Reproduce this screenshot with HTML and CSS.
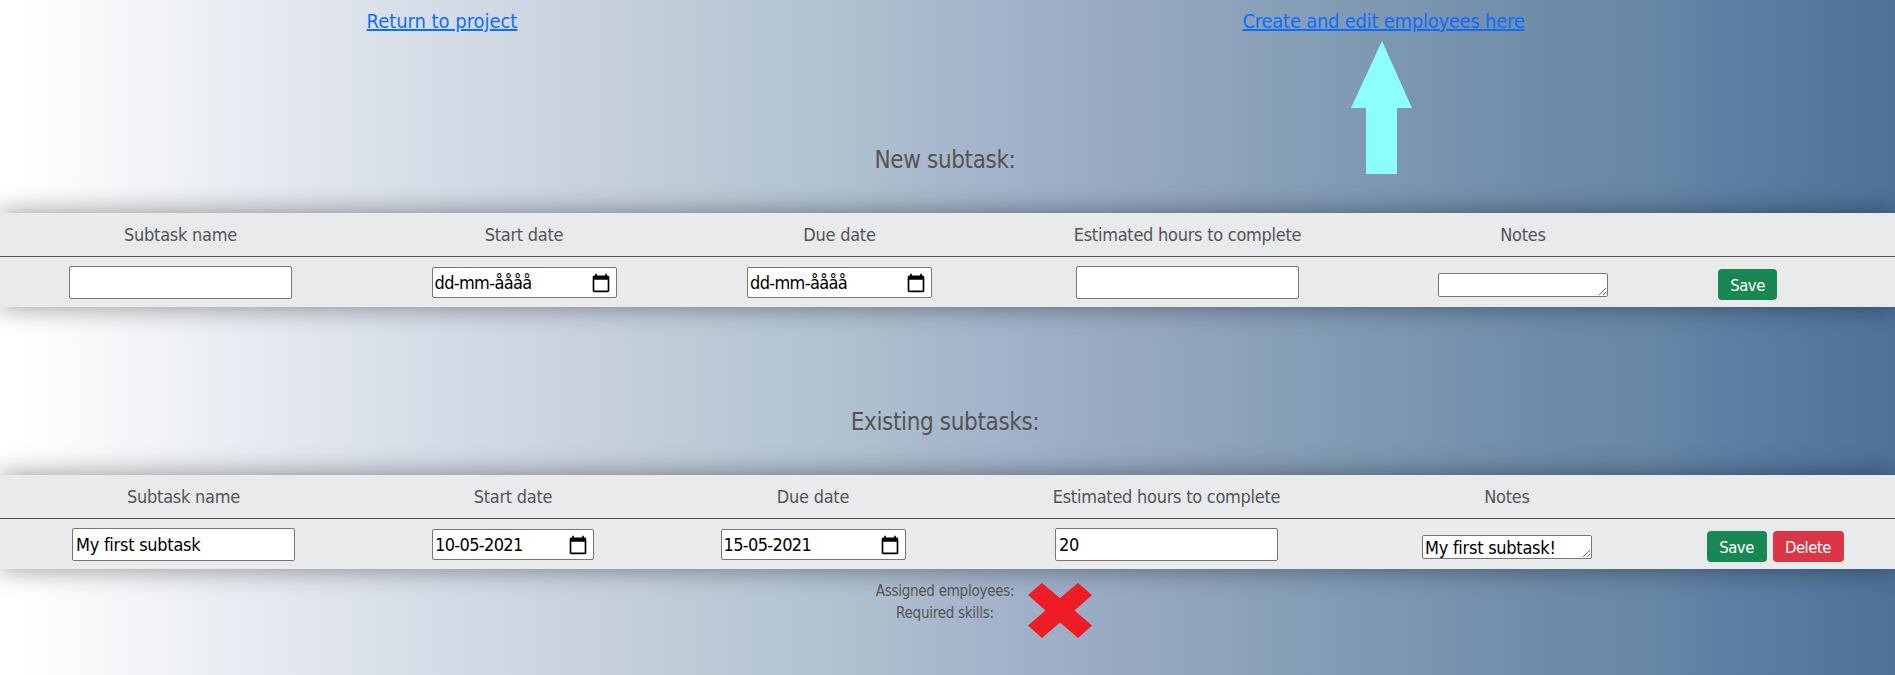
FILE: index.html
```
<!DOCTYPE html>
<html lang="en">
<head>
<meta charset="utf-8">
<title>Subtasks</title>
<link rel="stylesheet" href="styles.css">
</head>
<body>
<svg width="0" height="0" class="defs"><symbol id="cal" viewBox="0 0 24 24"><path fill-rule="evenodd" d="M20 3h-1V1h-2v2H7V1H5v2H4c-1.100 0-2 .9-2 2v16c0 1.100.9 2 2 2h16c1.100 0 2-.9 2-2V5c0-1.100-.9-2-2-2zm0 18H4V8h16v13z"/></symbol></svg>
<nav class="links">
  <div class="link-cell"><a class="link link-return" href="#">Return to project</a></div>
  <div class="link-cell link-cell-wide"><a class="link link-create" href="#">Create and edit employees here</a>
    <svg class="arrow" width="61" height="133" viewBox="0 0 61 133"><path fill="#8cfffb" d="M31 0L61 67H46V133H15V67H0Z"/></svg>
  </div>
</nav>
<h1 class="title">New subtask:</h1>
<section class="panel panel-new">
  <div class="row head"><span>Subtask name</span><span>Start date</span><span>Due date</span><span>Estimated hours to complete</span><span>Notes</span><span></span></div>
  <div class="row body">
    <span><input class="text" type="text"></span>
    <span><span class="date"><span>dd-mm-åååå</span><svg class="cal" viewBox="0 0 24 24"><use href="#cal"/></svg></span></span>
    <span><span class="date"><span>dd-mm-åååå</span><svg class="cal" viewBox="0 0 24 24"><use href="#cal"/></svg></span></span>
    <span><input class="text" type="text"></span>
    <span><textarea class="notes"></textarea></span>
    <span class="actions"><button class="btn save">Save</button></span>
  </div>
</section>
<h1 class="title">Existing subtasks:</h1>
<section class="panel panel-old">
  <div class="row head"><span>Subtask name</span><span>Start date</span><span>Due date</span><span>Estimated hours to complete</span><span>Notes</span><span></span></div>
  <div class="row body">
    <span><input class="text" type="text" value="My first subtask"></span>
    <span><span class="date narrow"><span>10-05-2021</span><svg class="cal" viewBox="0 0 24 24"><use href="#cal"/></svg></span></span>
    <span><span class="date"><span>15-05-2021</span><svg class="cal" viewBox="0 0 24 24"><use href="#cal"/></svg></span></span>
    <span><input class="text" type="text" value="20"></span>
    <span><textarea class="notes">My first subtask!</textarea></span>
    <span class="actions"><button class="btn save">Save</button><button class="btn delete">Delete</button></span>
  </div>
</section>
<footer class="meta">
  <div>Assigned employees:</div>
  <div>Required skills:</div>
  <svg class="cross" width="64" height="55" viewBox="0 0 64 55"><path fill="#ee1c25" d="M14 0L32 15L50 0L64 12L46.500 27.500L64 42.500L50 55L32 39.500L14 55L0 42.500L17.500 27.500L0 12Z"/></svg>
</footer>
</body>
</html>
```
FILE: styles.css
```
* { box-sizing: border-box; }
body {
  margin: 0;
  height: 675px;
  overflow: hidden;
  color: #545454;
  font-family: "DejaVu Sans Condensed", "DejaVu Sans", sans-serif;
  font-stretch: condensed;
  font-size: 18px;
  letter-spacing: -.26px;
  background: linear-gradient(to right, #fff 0%, #fff 1%, #e0e5ed 17%, #d3dae6 24.500%, #bfccd8 36%, #afc0cf 45%, #a1b2ca 53.500%, #93a6bf 62%, #809ab3 71.500%, #6d8ba9 82%, #6888a6 87%, #5d7fa4 91%, #4e7199 100%);
}
.defs { display: block; }
.links { display: flex; height: 142px; padding-right: 12px; }
.link-cell { position: relative; width: 884px; text-align: center; }
.link-cell-wide { width: 999px; }
.link { color: #0d6efd; font-size: 20px; line-height: 42px; text-decoration: underline; }
.link-return { letter-spacing: -.04px; }
.arrow { position: absolute; left: 467px; top: 41px; }
.title { margin: 0; height: 71px; padding-right: 5px; text-align: center; font-size: 24px; font-weight: 400; line-height: 36px; letter-spacing: -.36px; }
.panel { height: 94px; background: #e8eaec; box-shadow: 0 0 25px rgba(0, 0, 0, .42); }
.panel-new { margin-bottom: 97px; }
.row { display: grid; grid-template-columns: 361px 326px 305px 391px 280px 169px; }
.panel-old .row { grid-template-columns: 367px 292px 308px 399px 282px 247px; }
.row > span { display: flex; justify-content: center; align-items: flex-start; }
.head { height: 44px; border-bottom: 1px solid #545454; line-height: 44px; }
.text, .date, .notes { border: 1px solid #767676; border-radius: 2px; background: #fff; color: #000; font: inherit; letter-spacing: inherit; margin: 0; }
.text { width: 223px; height: 33px; margin-top: 9px; padding: 1px 3px; }
.date { display: flex; align-items: center; justify-content: space-between; width: 185px; height: 31px; margin-top: 10px; padding: 0 5px 0 2px; letter-spacing: -.65px; }
.narrow { width: 162px; }
.cal { width: 20px; height: 20px; }
.notes { width: 170px; height: 24px; margin-top: 16px; padding: 1px 2px; overflow: hidden; line-height: 22px; resize: both; }
.actions { gap: 6px; }
.panel-old .actions { padding-left: 7px; }
.btn { height: 31px; margin: 12px 0 0; padding: 1px 0 0; border: 0; border-radius: 4px; color: #fff; font: inherit; font-size: 16.500px; letter-spacing: -.45px; }
.save { width: 59px; background: #198754; }
.panel-old .save { width: 60px; }
.delete { width: 71px; background: #dc3545; }
.meta { position: relative; padding: 11px 5px 0 0; text-align: center; font-size: 15px; line-height: 22px; }
.cross { position: absolute; left: 1028px; top: 14px; }
```
